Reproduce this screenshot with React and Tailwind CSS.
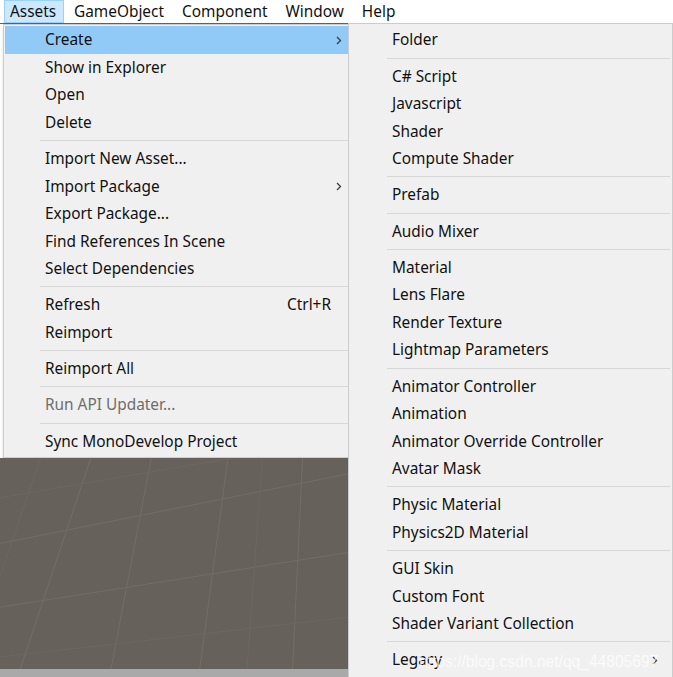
import React from 'react';

const FONT = { fontFamily: '"Noto Sans", "Liberation Sans", sans-serif' };

const leftItems = [
  { label: 'Create', active: true, sub: true },
  { label: 'Show in Explorer' },
  { label: 'Open' },
  { label: 'Delete' },
  '-',
  { label: 'Import New Asset...' },
  { label: 'Import Package', sub: true },
  { label: 'Export Package...' },
  { label: 'Find References In Scene' },
  { label: 'Select Dependencies' },
  '-',
  { label: 'Refresh', shortcut: 'Ctrl+R' },
  { label: 'Reimport' },
  '-',
  { label: 'Reimport All' },
  '-',
  { label: 'Run API Updater...', disabled: true },
  '-',
  { label: 'Sync MonoDevelop Project' },
];

const createItems = [
  { label: 'Folder' },
  '-',
  { label: 'C# Script' },
  { label: 'Javascript' },
  { label: 'Shader' },
  { label: 'Compute Shader' },
  '-',
  { label: 'Prefab' },
  '-',
  { label: 'Audio Mixer' },
  '-',
  { label: 'Material' },
  { label: 'Lens Flare' },
  { label: 'Render Texture' },
  { label: 'Lightmap Parameters' },
  '-',
  { label: 'Animator Controller' },
  { label: 'Animation' },
  { label: 'Animator Override Controller' },
  { label: 'Avatar Mask' },
  '-',
  { label: 'Physic Material' },
  { label: 'Physics2D Material' },
  '-',
  { label: 'GUI Skin' },
  { label: 'Custom Font' },
  { label: 'Shader Variant Collection' },
  '-',
  { label: 'Legacy', sub: true },
];

function Chevron() {
  return (
    <svg width="6" height="9" viewBox="0 0 6 9" className="shrink-0">
      <path d="M1 1 L4.5 4.5 L1 8" fill="none" stroke="#3c3c3c" strokeWidth="1.3" />
    </svg>
  );
}

function MenuList({ items, textLeft, sepLeft, chevronRight }) {
  return items.map((it, i) => {
    if (it === '-') {
      return (
        <div key={i} className="flex h-[8.75px] items-center" style={{ paddingLeft: sepLeft }}>
          <div className="h-px w-full bg-[#d7d7d7]" />
        </div>
      );
    }
    return (
      <div
        key={i}
        className={`flex h-[27.5px] items-center text-[15.4px] ${it.active ? 'bg-[#91c9f7]' : ''} ${it.disabled ? 'text-[#6d6d6d]' : 'text-[#111]'}`}
        style={{ paddingLeft: textLeft, paddingRight: chevronRight }}
      >
        <span className="flex-1 whitespace-nowrap">{it.label}</span>
        {it.shortcut && <span className="mr-[11px] whitespace-nowrap">{it.shortcut}</span>}
        {it.sub && <Chevron />}
      </div>
    );
  });
}

function Scene() {
  return (
    <div className="relative flex-1 bg-[#67615b]">
      <svg className="absolute inset-0 h-full w-full" viewBox="0 0 345 212" preserveAspectRatio="none">
        <g stroke="#736d67" strokeWidth="1" fill="none">
          <line x1="0" y1="86" x2="345" y2="16" />
          <line x1="226" y1="0" x2="198" y2="212" />
          <line x1="90" y1="0" x2="20" y2="212" />
          <line x1="150" y1="0" x2="110" y2="212" />
          <line x1="300" y1="0" x2="290" y2="212" />
          <line x1="0" y1="150" x2="345" y2="95" />
        </g>
        <g stroke="#6d6761" strokeWidth="1" fill="none">
          <line x1="40" y1="0" x2="0" y2="120" />
          <line x1="260" y1="0" x2="245" y2="212" />
          <line x1="0" y1="200" x2="345" y2="160" />
          <line x1="0" y1="40" x2="345" y2="-20" />
        </g>
      </svg>
    </div>
  );
}

export default function App() {
  return (
    <div className="relative flex h-[677px] w-[673px] flex-col overflow-hidden bg-[#f0f0f0]" style={FONT}>
      {/* menu bar */}
      <div className="flex h-[23px] shrink-0 items-stretch bg-white text-[15.4px] text-[#111]">
        <div className="ml-[4px] flex w-[60px] items-center border border-[#99d1ff] bg-[#cce8ff] pl-[5px]">Assets</div>
        <div className="flex items-center pl-[10px] pr-[9px]">GameObject</div>
        <div className="flex items-center px-[9px]">Component</div>
        <div className="flex items-center px-[9px]">Window</div>
        <div className="flex items-center px-[9px]">Help</div>
      </div>

      <div className="flex min-h-0 flex-1">
        {/* left column: Assets menu over the scene */}
        <div className="flex w-[348px] shrink-0 flex-col bg-[#67615b]">
          <div className="mt-px flex flex-col bg-white">
            <div className="ml-[3px] border border-r-0 border-[#cccccc] bg-[#f0f0f0] pb-[2px] pl-px pt-[1.25px] shadow-[2px_3px_4px_rgba(0,0,0,0.45)]">
              <MenuList items={leftItems} textLeft={40} sepLeft={35} chevronRight={6} />
            </div>
          </div>
          <Scene />
          <div className="h-[8px] shrink-0 bg-[#a9a9a9]" />
        </div>

        {/* Create submenu */}
        <div className="flex-1 border-l border-r border-t border-[#cccccc] bg-[#f0f0f0] pt-[2.25px] pr-[2px]">
          <MenuList items={createItems} textLeft={43} sepLeft={38} chevronRight={12} />
        </div>
      </div>

      <div className="pointer-events-none absolute left-[419px] top-[650px] whitespace-nowrap text-[15.6px] text-white/75" style={{ fontFamily: '"Liberation Sans", sans-serif' }}>
        https://blog.csdn.net/qq_44805697
      </div>
    </div>
  );
}
